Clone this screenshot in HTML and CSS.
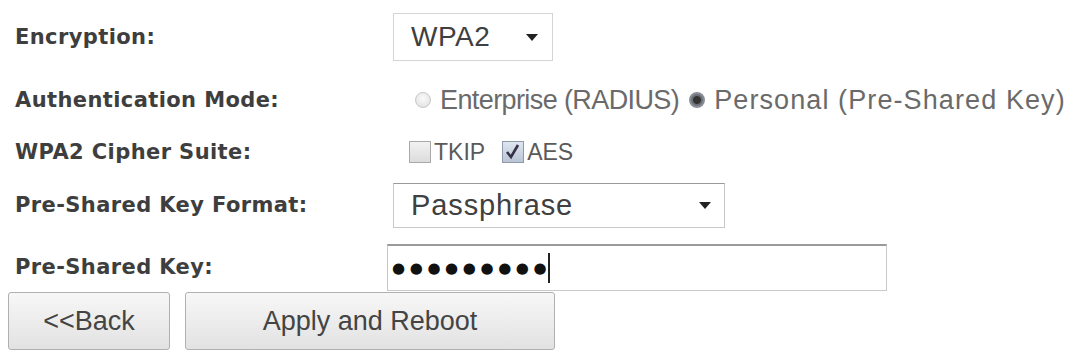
FILE: index.html
```html
<!DOCTYPE html>
<html>
<head>
<meta charset="utf-8">
<link rel="stylesheet" href="styles.css">
</head>
<body>
<div class="form">
  <div class="label">Encryption:</div>
  <div class="ctrl">
    <div class="select sel-enc"><span class="sel-text">WPA2</span><svg class="arrow" width="12" height="7" viewBox="0 0 12 7"><path d="M0 0H12L6 7Z" fill="#222"/></svg></div>
  </div>

  <div class="label">Authentication Mode:</div>
  <div class="ctrl opts">
    <span class="radio"></span><span class="opt-text light ent">Enterprise (RADIUS)</span>
    <span class="radio checked"></span><span class="opt-text light pers">Personal (Pre-Shared Key)</span>
  </div>

  <div class="label">WPA2 Cipher Suite:</div>
  <div class="ctrl opts cipher">
    <span class="check"></span><span class="opt-text">TKIP</span>
    <span class="check checked"><svg width="20" height="20" viewBox="0 0 20 20"><path d="M4 10 L8 15 L15 3" stroke="#334" stroke-width="2.6" fill="none"/></svg></span><span class="opt-text">AES</span>
  </div>

  <div class="label">Pre-Shared Key Format:</div>
  <div class="ctrl">
    <div class="select sel-fmt"><span class="sel-text">Passphrase</span><svg class="arrow" width="12" height="7" viewBox="0 0 12 7"><path d="M0 0H12L6 7Z" fill="#222"/></svg></div>
  </div>

  <div class="label">Pre-Shared Key:</div>
  <div class="ctrl">
    <div class="input"><span class="dots">●●●●●●●●●</span><span class="caret"></span></div>
  </div>
</div>
<div class="actions">
  <button class="btn btn-back">&lt;&lt;Back</button>
  <button class="btn btn-apply">Apply and Reboot</button>
</div>
</body>
</html>
```

FILE: styles.css
```css
html, body {
  margin: 0;
  padding: 0;
  background: #ffffff;
}
body {
  font-family: "Liberation Sans", Arial, sans-serif;
  color: #444;
  width: 1084px;
  height: 357px;
  overflow: hidden;
}
.form {
  display: grid;
  grid-template-columns: 378px 1fr;
  grid-template-rows: 54px 72px 32px 74px 50px;
  padding: 10px 0 0 15px;
  align-items: center;
}
.label {
  font-family: "DejaVu Sans", Verdana, sans-serif;
  font-weight: bold;
  font-size: 21px;
  color: #3e3e3e;
  letter-spacing: 0.4px;
}
.ctrl {
  display: flex;
  align-items: center;
}
.select {
  box-sizing: border-box;
  display: flex;
  align-items: center;
  justify-content: space-between;
  border: 1px solid #d4d4d4;
  background: #fff;
  height: 48px;
  padding: 0 14px 0 17px;
  font-size: 28px;
  color: #404040;
}
.sel-enc { width: 160px; }
.sel-enc .sel-text { letter-spacing: 0.5px; }
.sel-fmt {
  width: 332px;
  height: 45px;
  border-color: #c9c9c9;
  border-top-color: #9a9a9a;
  padding-left: 17px;
  padding-right: 13px;
}
.sel-fmt .sel-text {
  font-size: 29px;
  letter-spacing: 0.9px;
}
.arrow { flex: none; }
.opts {
  font-size: 27px;
  color: #555;
}
.light { color: #6a6a6a; }
.ent { letter-spacing: -0.6px; }
.pers { letter-spacing: 1.1px; }
.radio {
  box-sizing: border-box;
  width: 16px;
  height: 16px;
  border-radius: 50%;
  border: 1px solid #c8c8c8;
  background: radial-gradient(circle at 50% 40%, #fafafa, #dedede);
  margin-left: 22px;
  flex: none;
}
.radio.checked {
  border: 2px solid #8a8f96;
  background: radial-gradient(circle at 50% 50%, #333 0 3.5px, #6b7078 4.5px);
  margin-left: 10px;
}
.opt-text { margin-left: 9px; }
.cipher {
  font-size: 23px;
  color: #5a5a5a;
}
.check {
  box-sizing: border-box;
  width: 22px;
  height: 22px;
  border: 1px solid #a9a9a9;
  background: linear-gradient(#f2f2f2, #dcdcdc);
  margin-left: 16px;
  flex: none;
  display: flex;
  align-items: center;
  justify-content: center;
}
.check + .opt-text { margin-left: 3px; }
.check.checked {
  margin-left: 17px;
  background: linear-gradient(#dfe6f0, #b9c4d4);
  border-color: #8f9aaa;
}
.input {
  box-sizing: border-box;
  width: 500px;
  height: 47px;
  margin-left: -6px;
  border: 1px solid #c9c9c9;
  border-top: 2px solid #9a9a9a;
  display: flex;
  align-items: center;
  padding-left: 4px;
}
.dots {
  font-family: "DejaVu Sans", sans-serif;
  font-size: 15px;
  letter-spacing: 4.6px;
  color: #111;
}
.caret {
  width: 2px;
  height: 30px;
  background: #222;
  margin-left: -3px;
}
.actions {
  display: flex;
  gap: 15px;
  padding-left: 8px;
}
.btn {
  box-sizing: border-box;
  height: 58px;
  border: 1px solid #b0b0b0;
  border-radius: 3px;
  background: linear-gradient(#f7f7f7, #e2e2e2);
  font-family: "Liberation Sans", Arial, sans-serif;
  font-size: 27px;
  color: #444;
  padding: 0;
}
.btn-back { width: 162px; }
.btn-apply { width: 370px; }
```
